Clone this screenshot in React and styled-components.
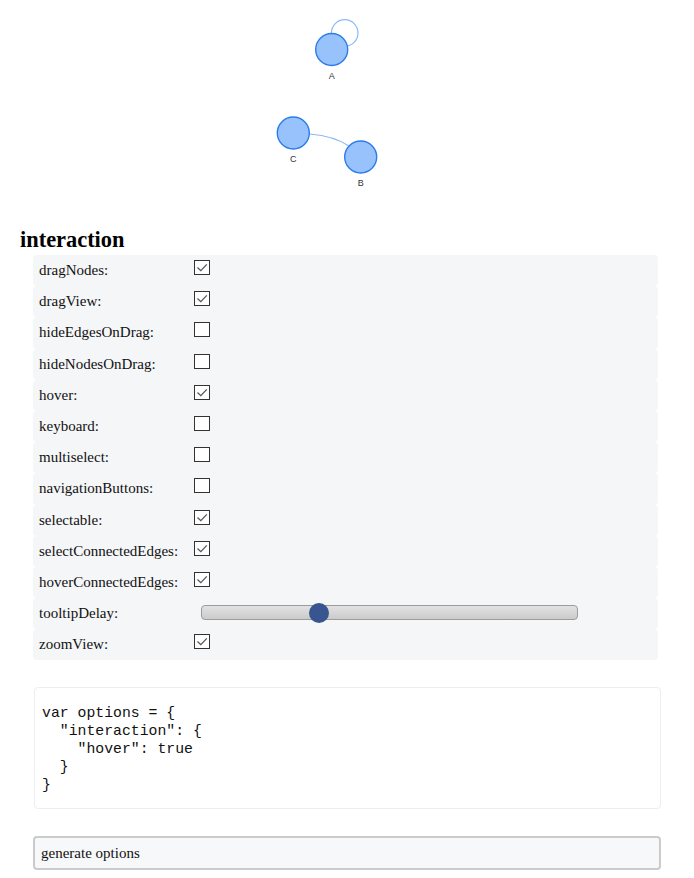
import React from 'react';
import styled, { createGlobalStyle } from 'styled-components';

const GlobalStyle = createGlobalStyle`
  body {
    margin: 8px;
    background: #ffffff;
    font-family: "Liberation Serif", "Times New Roman", serif;
    color: #111111;
  }
`;

const Page = styled.div`
  display: flex;
  flex-direction: column;
`;

const Network = styled.div`
  height: 219px;
  width: 100%;
`;

const Header = styled.div`
  font-size: 22.4px;
  font-weight: bold;
  line-height: 26px;
  padding-left: 12px;
  margin-bottom: 2px;
  color: #000;
`;

const Panel = styled.div`
  display: flex;
  flex-direction: column;
  width: 625px;
  margin-left: 25px;
`;

const Row = styled.div`
  display: flex;
  align-items: flex-start;
  height: 31.2px;
  background: #f5f6f8;
  border-radius: 4px;
  padding-left: 6px;
`;

const Label = styled.div`
  width: 155px;
  font-size: 15px;
  line-height: 31px;
  color: #111;
`;

const Box = styled.span`
  display: flex;
  align-items: center;
  justify-content: center;
  box-sizing: border-box;
  width: 16px;
  height: 15px;
  margin-top: 5px;
  border: 1px solid #333;
  background: #ffffff;
`;

const Slider = styled.input`
  -webkit-appearance: none;
  appearance: none;
  box-sizing: border-box;
  width: 377px;
  height: 15px;
  margin: 7px 0 0 7px;
  padding: 0;
  border: 1px solid #9c9c9c;
  border-radius: 4px;
  background: linear-gradient(#e2e2e2, #cbcbcb);
  outline: none;

  &::-webkit-slider-thumb {
    -webkit-appearance: none;
    appearance: none;
    width: 20px;
    height: 20px;
    border-radius: 50%;
    background: #385590;
    border: none;
  }
`;

const Code = styled.pre`
  box-sizing: border-box;
  width: 627px;
  margin: 27px 0 0 26px;
  padding: 16px 7px 14px;
  border: 1px solid #eeeeee;
  border-radius: 4px;
  background: #ffffff;
  font-family: "Liberation Mono", "Courier New", monospace;
  font-size: 14.8px;
  line-height: 18px;
  color: #111111;
`;

const GenerateButton = styled.div`
  box-sizing: border-box;
  width: 628px;
  height: 34px;
  margin: 27px 0 0 25px;
  padding-left: 6px;
  border: 2px solid #cbcbcb;
  border-radius: 4px;
  background: #f7f8fa;
  font-size: 15px;
  line-height: 30px;
  color: #111;
`;

function Check({ checked }) {
  return (
    <Box>
      {checked && (
        <svg width="14" height="13" viewBox="0 0 14 13">
          <polyline points="2.5,6.5 5.8,9.6 11.8,3.4" fill="none" stroke="#555" strokeWidth="1.3" />
        </svg>
      )}
    </Box>
  );
}

function Graph() {
  const nodes = [
    { id: 'A', x: 323.7, y: 41.5 },
    { id: 'C', x: 285.3, y: 125 },
    { id: 'B', x: 352.7, y: 149 },
  ];
  return (
    <svg width="678" height="219" viewBox="0 0 678 219">
      <circle cx="336.7" cy="25" r="13.3" fill="none" stroke="#8bb9f6" strokeWidth="1.2" />
      <path d="M302 126 Q 326 128 341 138" fill="none" stroke="#8bb9f6" strokeWidth="1.2" />
      {nodes.map(n => (
        <g key={n.id}>
          <circle cx={n.x} cy={n.y} r="16" fill="#97c2fc" stroke="#2b7ce9" strokeWidth="1.4" />
          <text x={n.x} y={n.y + 29} textAnchor="middle" fontSize="9" fontFamily="Liberation Sans, Arial, sans-serif" fill="#343434">{n.id}</text>
        </g>
      ))}
    </svg>
  );
}

const options = [
  { name: 'dragNodes', checked: true },
  { name: 'dragView', checked: true },
  { name: 'hideEdgesOnDrag', checked: false },
  { name: 'hideNodesOnDrag', checked: false },
  { name: 'hover', checked: true },
  { name: 'keyboard', checked: false },
  { name: 'multiselect', checked: false },
  { name: 'navigationButtons', checked: false },
  { name: 'selectable', checked: true },
  { name: 'selectConnectedEdges', checked: true },
  { name: 'hoverConnectedEdges', checked: true },
  { name: 'tooltipDelay', range: 300 },
  { name: 'zoomView', checked: true },
];

const code = `var options = {
  "interaction": {
    "hover": true
  }
}`;

export default function App() {
  return (
    <Page>
      <GlobalStyle />
      <Network>
        <Graph />
      </Network>
      <Header>interaction</Header>
      <Panel>
        {options.map(opt => (
          <Row key={opt.name}>
            <Label>{opt.name}:</Label>
            {opt.range !== undefined
              ? <Slider type="range" min="0" max="1000" defaultValue={opt.range} />
              : <Check checked={opt.checked} />}
          </Row>
        ))}
      </Panel>
      <Code>{code}</Code>
      <GenerateButton>generate options</GenerateButton>
    </Page>
  );
}
